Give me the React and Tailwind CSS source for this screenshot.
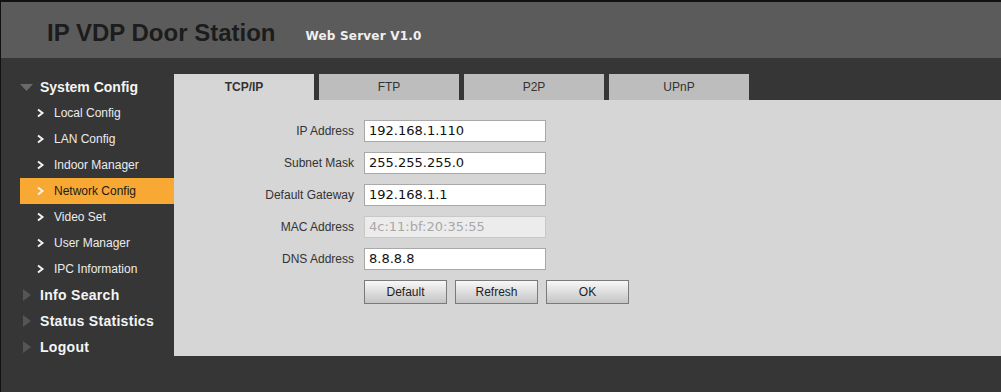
import React from "react";

const Chevron = () => (
  <svg width="9" height="10" viewBox="0 0 9 10" className="shrink-0">
    <polyline points="2,1.5 6.5,5 2,8.5" fill="none" stroke="#f2f2f2" strokeWidth="2" />
  </svg>
);

const TriDown = () => (
  <svg width="13" height="9" viewBox="0 0 13 9" className="shrink-0">
    <polygon points="0,1 13,1 6.5,8" fill="#6a6a6a" />
  </svg>
);

const TriRight = () => (
  <svg width="10" height="12" viewBox="0 0 10 12" className="shrink-0">
    <polygon points="1,0 9,6 1,12" fill="#555555" />
  </svg>
);

const subItems = [
  "Local Config",
  "LAN Config",
  "Indoor Manager",
  "Network Config",
  "Video Set",
  "User Manager",
  "IPC Information",
];

const fields = [
  { label: "IP Address", value: "192.168.1.110" },
  { label: "Subnet Mask", value: "255.255.255.0" },
  { label: "Default Gateway", value: "192.168.1.1" },
  { label: "MAC Address", value: "4c:11:bf:20:35:55", disabled: true },
  { label: "DNS Address", value: "8.8.8.8" },
];

const tabs = ["TCP/IP", "FTP", "P2P", "UPnP"];

export default function App() {
  return (
    <div
      className="w-[1001px] h-[392px] bg-[#363636] border-t-2 border-l border-[#111111] overflow-hidden flex flex-col"
      style={{ fontFamily: '"Liberation Sans", Arial, sans-serif' }}
    >
      <div className="h-[56px] bg-[#5b5b5b] flex items-center pl-[46px] pt-[6px] shrink-0">
        <span className="text-[24px] font-bold text-[#1c1c1c] leading-none">IP VDP Door Station</span>
        <span
          className="ml-[30px] mt-[5px] text-[12px] font-bold text-[#f0f0f0] leading-none tracking-[0.2px]"
          style={{ fontFamily: '"DejaVu Sans", Verdana, sans-serif' }}
        >
          Web Server V1.0
        </span>
      </div>
      <div className="flex pt-[16px]">
        <div className="w-[173px] shrink-0 flex flex-col">
          <div className="h-[26px] flex items-center pl-[19px] gap-[7px]">
            <TriDown />
            <span className="text-[14px] font-bold text-[#f4f4f4]">System Config</span>
          </div>
          {subItems.map((s) => (
            <div
              key={s}
              className={
                "h-[26px] flex items-center gap-[9px] ml-[19px] pl-[16px] text-[12px] " +
                (s === "Network Config" ? "bg-[#f7a933] text-[#1a1a1a]" : "text-[#ececec]")
              }
            >
              <Chevron />
              <span>{s}</span>
            </div>
          ))}
          {["Info Search", "Status Statistics", "Logout"].map((s) => (
            <div key={s} className="h-[26px] flex items-center pl-[21px] gap-[8px]">
              <TriRight />
              <span className="text-[14px] font-bold text-[#f4f4f4] tracking-[0.3px]">{s}</span>
            </div>
          ))}
        </div>
        <div className="flex-1 flex flex-col">
          <div className="h-[26px] flex gap-[5px]">
            {tabs.map((t, i) => (
              <div
                key={t}
                className={
                  "w-[140px] flex items-center justify-center text-[12px] text-[#333333] " +
                  (i === 0 ? "bg-[#d6d6d6] font-bold" : "bg-[#bdbdbd]")
                }
              >
                {t}
              </div>
            ))}
          </div>
          <div className="h-[256px] bg-[#d6d6d6] pt-[20px] flex flex-col gap-[10px]">
            {fields.map((f) => (
              <div key={f.label} className="flex items-center h-[22px]">
                <div className="w-[190px] text-right text-[12px] text-[#333333] pr-[10px]">{f.label}</div>
                <div
                  className={
                    "w-[182px] h-[22px] border flex items-center pl-[4px] text-[13px] " +
                    (f.disabled
                      ? "bg-[#ececec] border-[#c8c8c8] text-[#a8a8a8]"
                      : "bg-white border-[#a9a9a9] text-[#111111]")
                  }
                  style={{ fontFamily: '"DejaVu Sans", Tahoma, sans-serif' }}
                >
                  {f.value}
                </div>
              </div>
            ))}
            <div className="flex gap-[8px] pl-[190px]">
              {["Default", "Refresh", "OK"].map((b) => (
                <div
                  key={b}
                  className="w-[83px] h-[24px] border border-[#7a7a7a] bg-gradient-to-b from-[#f8f8f8] to-[#c4c4c4] flex items-center justify-center text-[12px] text-[#222222]"
                >
                  {b}
                </div>
              ))}
            </div>
          </div>
        </div>
      </div>
    </div>
  );
}
